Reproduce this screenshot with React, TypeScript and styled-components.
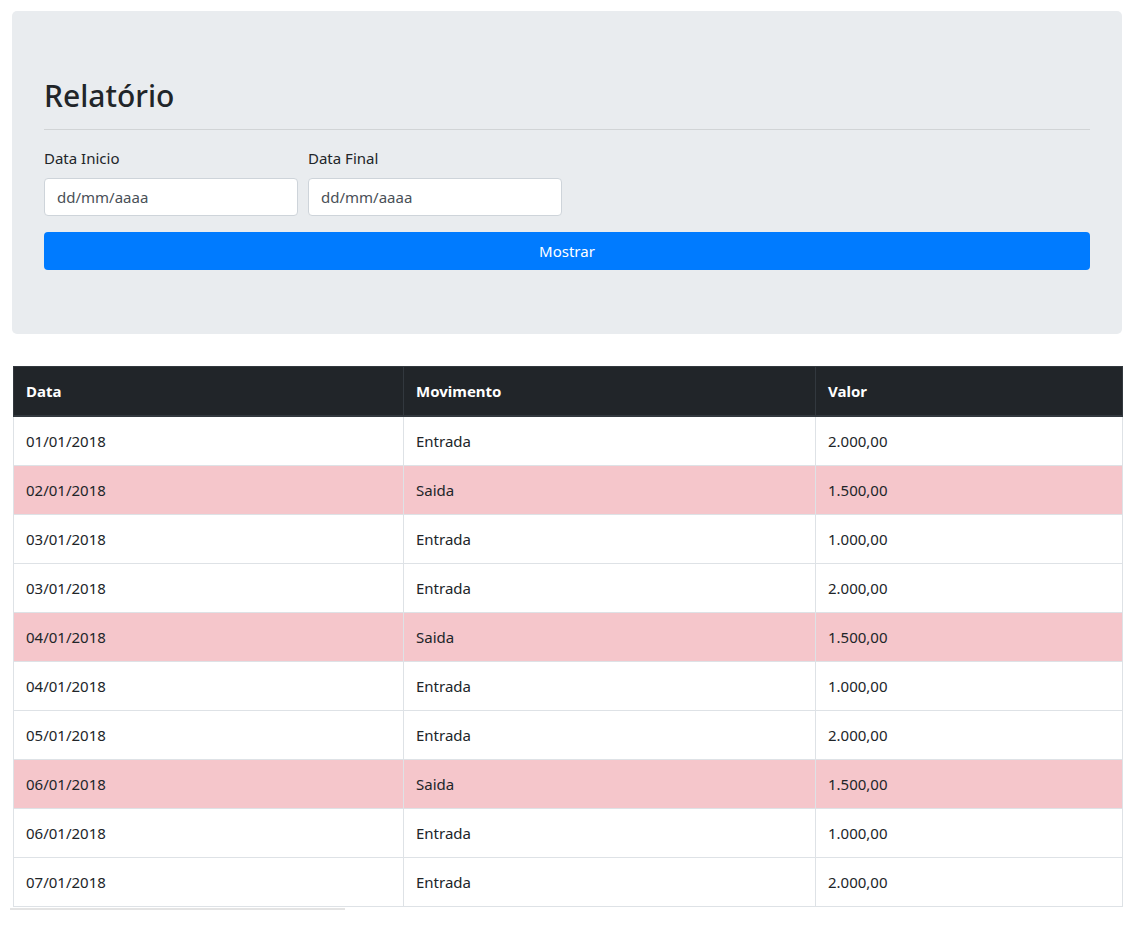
import React from 'react';
import styled, { createGlobalStyle } from 'styled-components';

interface Movimento {
  data: string;
  tipo: 'Entrada' | 'Saida';
  valor: string;
}

interface RowProps {
  danger?: boolean;
}

const movimentos: Movimento[] = [
  { data: '01/01/2018', tipo: 'Entrada', valor: '2.000,00' },
  { data: '02/01/2018', tipo: 'Saida', valor: '1.500,00' },
  { data: '03/01/2018', tipo: 'Entrada', valor: '1.000,00' },
  { data: '03/01/2018', tipo: 'Entrada', valor: '2.000,00' },
  { data: '04/01/2018', tipo: 'Saida', valor: '1.500,00' },
  { data: '04/01/2018', tipo: 'Entrada', valor: '1.000,00' },
  { data: '05/01/2018', tipo: 'Entrada', valor: '2.000,00' },
  { data: '06/01/2018', tipo: 'Saida', valor: '1.500,00' },
  { data: '06/01/2018', tipo: 'Entrada', valor: '1.000,00' },
  { data: '07/01/2018', tipo: 'Entrada', valor: '2.000,00' },
];

const App: React.FC = () => {
  return (
    <>
      <GlobalStyle />
      <Page>
        <Jumbotron>
          <Title>Relatório</Title>
          <Divider />
          <FormRow>
            <Field>
              <Label>Data Inicio</Label>
              <DateInput placeholder="dd/mm/aaaa" />
            </Field>
            <Field>
              <Label>Data Final</Label>
              <DateInput placeholder="dd/mm/aaaa" />
            </Field>
          </FormRow>
          <SubmitButton>Mostrar</SubmitButton>
        </Jumbotron>

        <Table>
          <colgroup>
            <col style={{ width: 390 }} />
            <col style={{ width: 412 }} />
            <col />
          </colgroup>
          <thead>
            <tr>
              <Th>Data</Th>
              <Th>Movimento</Th>
              <Th>Valor</Th>
            </tr>
          </thead>
          <tbody>
            {movimentos.map((m, i) => (
              <Row key={i} danger={m.tipo === 'Saida'}>
                <Td>{m.data}</Td>
                <Td>{m.tipo}</Td>
                <Td>{m.valor}</Td>
              </Row>
            ))}
          </tbody>
        </Table>
        <ScrollThumb />
      </Page>
    </>
  );
};

export default App;

// Styled Components
const GlobalStyle = createGlobalStyle`
  * { box-sizing: border-box; }
  body {
    margin: 0;
    background: #fff;
    color: #212529;
    font-family: 'Noto Sans', 'Open Sans', sans-serif;
    font-size: 15px;
    line-height: 24px;
  }
`;

const Page = styled.div`
  padding: 11px 0 0 12px;
  width: 1122px;
`;

const Jumbotron = styled.div`
  background-color: #e9ecef;
  border-radius: 5px;
  padding: 64px 32px;
  margin-bottom: 32px;
`;

const Title = styled.h2`
  margin: 0;
  padding-top: 2px;
  font-size: 30px;
  font-weight: 500;
  line-height: 38px;
  color: #212529;
`;

const Divider = styled.hr`
  margin: 14px 0 16px;
  border: 0;
  border-top: 1px solid rgba(0, 0, 0, 0.1);
`;

const FormRow = styled.div`
  display: grid;
  grid-template-columns: 254px 254px;
  column-gap: 10px;
  margin-bottom: 16px;
`;

const Field = styled.div`
  display: flex;
  flex-direction: column;
`;

const Label = styled.label`
  font-size: 15px;
  line-height: 24px;
  margin-bottom: 8px;
  color: #212529;
`;

const DateInput = styled.input`
  height: 38px;
  padding: 6px 12px;
  font-family: inherit;
  font-size: 15px;
  color: #495057;
  background: #fff;
  border: 1px solid #ced4da;
  border-radius: 4px;
  outline: none;

  &::placeholder {
    color: #495057;
  }
`;

const SubmitButton = styled.button`
  display: block;
  width: 100%;
  height: 38px;
  border: none;
  border-radius: 4px;
  background-color: #007bff;
  color: #fff;
  font-family: inherit;
  font-size: 15px;
  cursor: pointer;
`;

const Table = styled.table`
  width: 1110px;
  margin-left: 1px;
  border-collapse: collapse;
  table-layout: fixed;
  border: 1px solid #dee2e6;
`;

const Th = styled.th`
  background-color: #212529;
  color: #fff;
  text-align: left;
  font-weight: 700;
  padding: 12px 12px 11px;
  height: 49px;
  border: 1px solid #32383e;
  border-bottom-width: 2px;
`;

const Row = styled.tr<RowProps>`
  background-color: ${props => (props.danger ? '#f5c6cb' : '#fff')};
`;

const Td = styled.td`
  padding: 12px;
  height: 49px;
  border: 1px solid #dee2e6;
  color: #212529;
`;

const ScrollThumb = styled.div`
  width: 335px;
  height: 2px;
  margin: 1px 0 0 -2px;
  background-color: #e4e4e4;
`;
